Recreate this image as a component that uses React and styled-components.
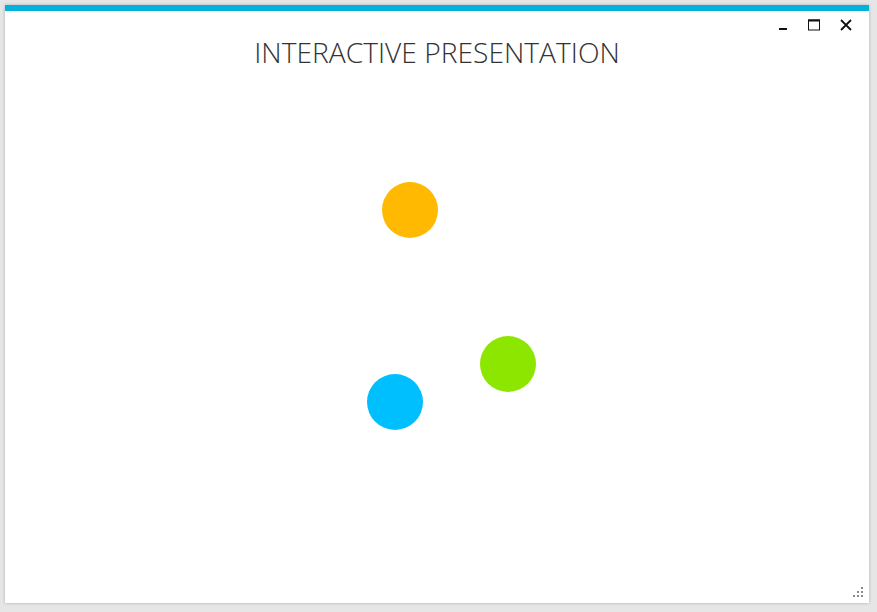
import React from "react";
import styled, { createGlobalStyle } from "styled-components";

const GlobalStyle = createGlobalStyle`
  html, body {
    margin: 0;
    padding: 0;
    background: #e6e6e6;
    font-family: "Open Sans", "Liberation Sans", sans-serif;
  }
`;

const Page = styled.div`
  width: 877px;
  height: 612px;
  padding: 5px 8px 9px 5px;
  box-sizing: border-box;
  display: flex;
`;

const Window = styled.div`
  position: relative;
  flex: 1;
  display: flex;
  flex-direction: column;
  background: #fff;
  border-top: 6px solid #00b2dc;
  box-shadow: 0 0 3px rgba(0, 0, 0, 0.25);
`;

const Header = styled.div`
  display: flex;
  justify-content: center;
  padding-top: 23px;
`;

const Title = styled.h1`
  margin: 0;
  font-family: "Open Sans", "Liberation Sans", sans-serif;
  font-weight: 300;
  font-size: 28.2px;
  line-height: 36px;
  color: #333;
`;

const Controls = styled.div`
  position: absolute;
  top: 8px;
  right: 17px;
  display: flex;
  gap: 20px;
  align-items: center;
`;

const ControlButton = styled.button`
  width: 12px;
  height: 12px;
  padding: 0;
  border: none;
  background: none;
  cursor: pointer;
  display: flex;
  align-items: center;
  justify-content: center;
`;

const Canvas = styled.div`
  position: relative;
  flex: 1;
`;

const Dot = styled.div`
  position: absolute;
  width: 56px;
  height: 56px;
  border-radius: 50%;
  background: ${(props) => props.color};
`;

const Grip = styled.svg`
  position: absolute;
  right: 5px;
  bottom: 5px;
`;

const dots = [
  { color: "#ffb900", x: 410, y: 210 },
  { color: "#8ce600", x: 508, y: 364 },
  { color: "#00bfff", x: 395, y: 402 },
];

const App = () => {
  return (
    <>
      <GlobalStyle />
      <Page>
        <Window>
          <Header>
            <Title>INTERACTIVE PRESENTATION</Title>
          </Header>
          <Controls>
            <ControlButton aria-label="minimize">
              <svg width="12" height="12" viewBox="0 0 12 12">
                <rect x="3" y="9" width="8" height="2" fill="#111" />
              </svg>
            </ControlButton>
            <ControlButton aria-label="maximize">
              <svg width="12" height="12" viewBox="0 0 12 12">
                <rect x="0.5" y="1" width="11" height="10" fill="none" stroke="#111" strokeWidth="1" />
                <rect x="0" y="0.5" width="12" height="2" fill="#111" />
              </svg>
            </ControlButton>
            <ControlButton aria-label="close">
              <svg width="12" height="12" viewBox="0 0 12 12">
                <path d="M1 1 L11 11 M11 1 L1 11" stroke="#111" strokeWidth="1.8" />
              </svg>
            </ControlButton>
          </Controls>
          <Canvas>
            {dots.map((d) => (
              // coordinates are page positions, canvas starts at (5, 70)
              <Dot
                key={d.color}
                color={d.color}
                style={{ left: d.x - 5 - 28, top: d.y - 70 - 28 }}
              />
            ))}
          </Canvas>
          <Grip width="12" height="12" viewBox="0 0 12 12">
            <g fill="#8a8a8a">
              <rect x="9" y="1" width="2" height="2" />
              <rect x="5" y="5" width="2" height="2" />
              <rect x="9" y="5" width="2" height="2" />
              <rect x="1" y="9" width="2" height="2" />
              <rect x="5" y="9" width="2" height="2" />
              <rect x="9" y="9" width="2" height="2" />
            </g>
          </Grip>
        </Window>
      </Page>
    </>
  );
};

export default App;
